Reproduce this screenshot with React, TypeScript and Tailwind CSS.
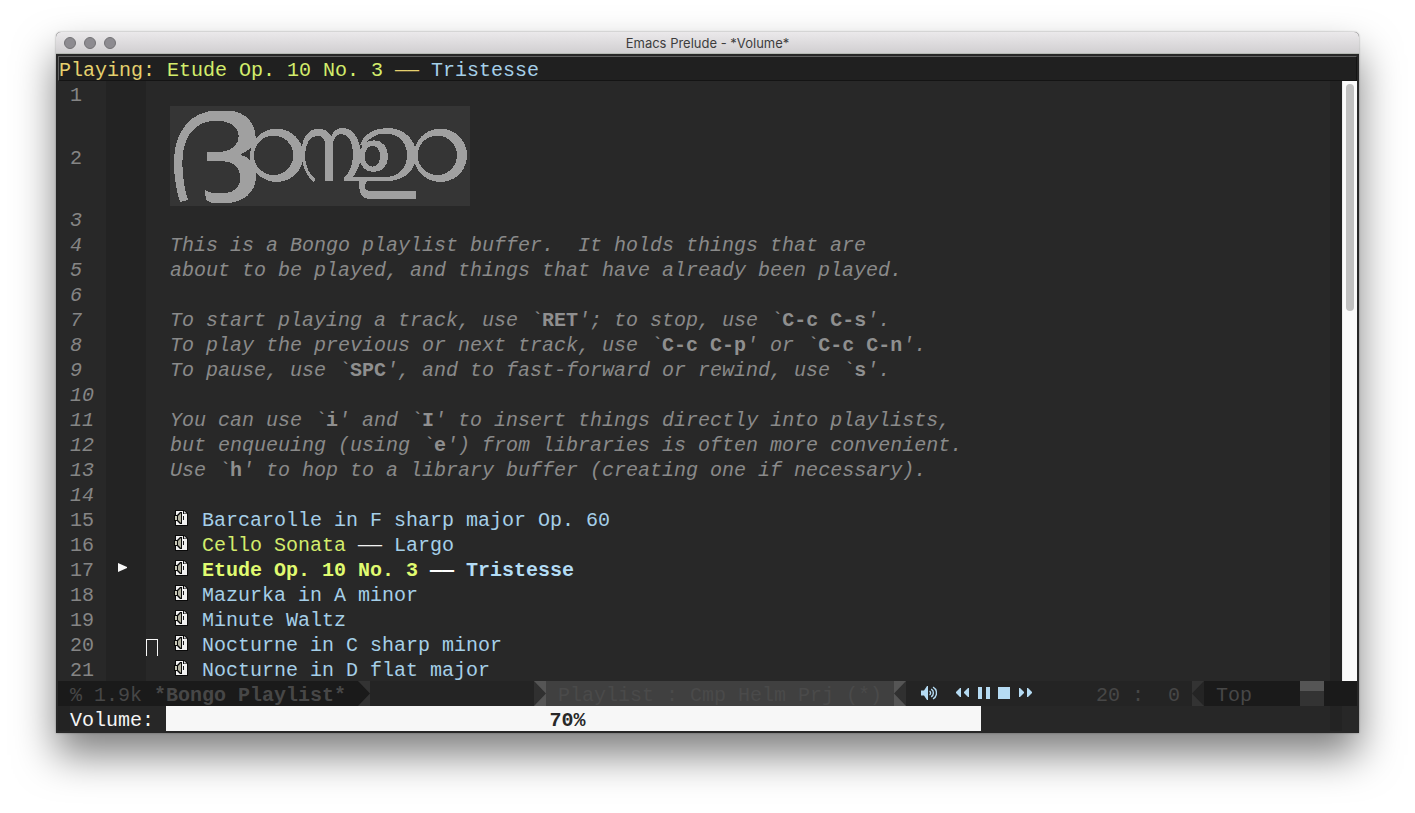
import React from 'react';

type Seg = [string, string?];

const key = 'not-italic font-bold text-[#8f8f8f]';

const intro: Seg[][] = [
  [],
  [['This is a Bongo playlist buffer.  It holds things that are']],
  [['about to be played, and things that have already been played.']],
  [],
  [['To start playing a track, use `'], ['RET', key], ["'; to stop, use `"], ['C-c C-s', key], ["'."]],
  [['To play the previous or next track, use `'], ['C-c C-p', key], ["' or `"], ['C-c C-n', key], ["'."]],
  [['To pause, use `'], ['SPC', key], ["', and to fast-forward or rewind, use `"], ['s', key], ["'."]],
  [],
  [['You can use `'], ['i', key], ["' and `"], ['I', key], ["' to insert things directly into playlists,"]],
  [['but enqueuing (using `'], ['e', key], ["') from libraries is often more convenient."]],
  [['Use `'], ['h', key], ["' to hop to a library buffer (creating one if necessary)."]],
  [],
];

const blue = 'text-[#a5cfe8]';
const lime = 'text-[#d3ec6c]';

const tracks: { segs: Seg[]; playing?: boolean; cursor?: boolean }[] = [
  { segs: [['Barcarolle in F sharp major Op. 60', blue]] },
  { segs: [['Cello Sonata', lime], [' —— ', 'text-[#f2f2f2]'], ['Largo', blue]] },
  {
    playing: true,
    segs: [
      ['Etude Op. 10 No. 3', 'font-bold text-[#e0fb70]'],
      [' —— ', 'font-bold text-white'],
      ['Tristesse', 'font-bold text-[#b3dcf5]'],
    ],
  },
  { segs: [['Mazurka in A minor', blue]] },
  { segs: [['Minute Waltz', blue]] },
  { cursor: true, segs: [['Nocturne in C sharp minor', blue]] },
  { segs: [['Nocturne in D flat major', blue]] },
];

function Segments({ segs }: { segs: Seg[] }) {
  return (
    <>
      {segs.map(([text, cls], i) => (
        <span key={i} className={cls}>
          {text}
        </span>
      ))}
    </>
  );
}

function Line({
  n,
  italic,
  marker,
  tall,
  children,
}: {
  n: number;
  italic?: boolean;
  marker?: boolean;
  tall?: boolean;
  children?: React.ReactNode;
}) {
  return (
    <div className={tall ? 'flex h-[100px]' : 'flex h-[25px]'}>
      <div
        className={
          italic
            ? 'flex w-12 shrink-0 items-center pt-1 pl-3 italic text-[#858585]'
            : 'flex w-12 shrink-0 items-center pt-1 pl-3 text-[#858585]'
        }
      >
        {n}
      </div>
      <div className="flex w-10 shrink-0 items-center bg-[#232323] pl-3">
        {marker && (
          <svg width="9" height="9" viewBox="0 0 9 9" className="mb-0.5" aria-hidden="true">
            <path d="M0 0L9 4V5L0 9Z" fill="#f8f8f8" />
          </svg>
        )}
      </div>
      {tall ? (
        <div className="min-w-0 flex-1">{children}</div>
      ) : (
        <div className="flex min-w-0 flex-1 items-center pt-1">{children}</div>
      )}
    </div>
  );
}

function BongoLogo() {
  return (
    <svg
      width="300"
      height="100"
      viewBox="30 30 900 300"
      shapeRendering="crispEdges"
      className="ml-6 bg-[#353535]"
      role="img"
      aria-label="Bongo"
    >
      <g fill="#a0a0a0" fillRule="evenodd">
        <path d="M60 318C48 280 41 235 42 190C44 105 95 44 170 44L205 44C258 46 286 82 287 125C290 140 272 162 241 176C272 186 290 205 288 240C288 290 250 322 190 322L170 322C150 321 137 315 137 303L134 282C148 290 160 292 175 292L190 292C225 291 241 272 241 245C241 215 222 196 185 195L141 195L141 168L185 168C218 163 236 145 236 120C236 92 210 74 170 74C105 74 67 120 67 200C67 235 73 280 84 312Z" />
        <path d="M350 98a80 80 0 1 0 0.1 0ZM341 119a59 59 0 1 1 -0.1 0Z" />
        <path d="M841 98a80 80 0 1 0 0.1 0ZM832 119a59 59 0 1 1 -0.1 0Z" />
        <path d="M460 258C438 236 424 210 424 165C426 125 446 98 476 98C493 98 506 107 514 121C520 104 533 96 549 96C580 97 602 130 602 178C602 205 590 232 578 243L675 243C717 243 741 215 741 178C741 140 717 113 675 113C645 113 622 128 613 152L600 146C611 115 640 96 680 96C732 96 768 130 768 176C768 222 735 255 682 255L622 255C616 262 614 267 614 272C615 280 621 285 632 285L768 285L768 309L625 309C608 307 598 292 598 275L598 255L553 255L553 245C568 230 579 208 579 175C579 140 566 114 545 114C528 114 519 128 519 148L519 255L495 255L495 148C495 130 488 119 473 119C450 119 435 145 435 180C435 210 447 234 467 251Z" />
        <path d="M641 133C667 133 684 152 684 181C684 209 668 228 641 228C615 228 598 209 598 181C598 152 615 133 641 133ZM638 150C624 150 614 162 614 181C614 200 624 212 638 212C651 212 660 200 660 181C660 162 651 150 638 150Z" />
      </g>
    </svg>
  );
}

function TrackIcon() {
  return (
    <svg width="14" height="16" viewBox="0 0 14 16" className="mr-3.5 mb-1.5 ml-7 shrink-0" aria-hidden="true">
      <path d="M1 0H10L14 3V16H1Z" fill="#0a0a0a" />
      <path d="M2 1H9V4H13V15H2Z" fill="#f0f0f0" />
      <path d="M10 1L13 3.5H10Z" fill="#d8d8d8" />
      <path d="M0 5H3L6 2H8V14H6L3 11H0Z" fill="#0a0a0a" />
      <path d="M1 6H3V10H1Z" fill="#c9c9b8" />
      <path d="M4 6L7 3V13L4 10Z" fill="#b4b4a2" />
      <path d="M9 6H10V10H9Z" fill="#1a1a1a" />
    </svg>
  );
}

function Arrow({ flip, bg, fill }: { flip?: boolean; bg: string; fill: string }) {
  return (
    <svg width="12" height="25" viewBox="0 0 12 25" className="shrink-0" aria-hidden="true">
      <rect width="12" height="25" fill={bg} />
      <path d={flip ? 'M12 0L0 12.5L12 25Z' : 'M0 0L12 12.5L0 25Z'} fill={fill} />
    </svg>
  );
}

function Controls() {
  return (
    <div className="flex items-center pl-[15px]">
      <button type="button" aria-label="Volume" className="flex h-[25px] items-center">
        <svg width="16" height="14" viewBox="0 0 16 14" fill="#b5dbf3" className="mb-0.5">
          <path d="M0 4.5H3L6 0H7V14H6L3 9.5H0Z" />
          <path
            d="M8.5 5.2a2 2 0 0 1 0 3.6M10.2 3.2a4.4 4.4 0 0 1 0 7.6M12 1.2a6.6 6.6 0 0 1 0 11.6"
            fill="none"
            stroke="#b5dbf3"
            strokeWidth="1.4"
          />
        </svg>
      </button>
      <button type="button" aria-label="Previous" className="ml-[19px] flex h-[25px] items-center">
        <svg width="14" height="9" viewBox="0 0 14 9" fill="#b5dbf3" className="mb-0.5">
          <path d="M5 0V9H4L0 5V4L4 0ZM13 0V9H12L8 5V4L12 0Z" />
        </svg>
      </button>
      <button type="button" aria-label="Pause" className="ml-2 flex h-[25px] items-center">
        <svg width="12" height="12" viewBox="0 0 12 12" fill="#b5dbf3" className="mb-0.5">
          <path d="M0 0H4V12H0ZM8 0H12V12H8Z" />
        </svg>
      </button>
      <button type="button" aria-label="Stop" className="ml-2 flex h-[25px] items-center">
        <svg width="12" height="12" viewBox="0 0 12 12" fill="#b5dbf3" className="mb-0.5">
          <path d="M0 0H12V12H0Z" />
        </svg>
      </button>
      <button type="button" aria-label="Next" className="ml-[9px] flex h-[25px] items-center">
        <svg width="14" height="9" viewBox="0 0 14 9" fill="#b5dbf3" className="mb-0.5">
          <path d="M0 0V9H1L5 5V4L1 0ZM8 0V9H9L13 5V4L9 0Z" />
        </svg>
      </button>
    </div>
  );
}

export default function App() {
  return (
    <div className="flow-root min-h-screen bg-white">
      <main className="mx-14 mt-8 overflow-hidden rounded-t-[5px] bg-[#272727] font-['Liberation_Mono',monospace] text-[20px] leading-[25px] whitespace-pre shadow-[0_22px_40px_rgba(0,0,0,0.5),0_0_2px_rgba(0,0,0,0.4)]">
        <header className="relative flex h-[22px] items-center justify-center border-b border-[#b5b9b3] bg-linear-to-b from-[#ebe9eb] to-[#d1cfd1] font-['Inter',sans-serif] text-[13px] text-[#3d3d3d]">
          <div className="absolute left-2 flex gap-2">
            <span className="size-3 rounded-full border border-[#737275] bg-[#8d8b90]" />
            <span className="size-3 rounded-full border border-[#737275] bg-[#8d8b90]" />
            <span className="size-3 rounded-full border border-[#737275] bg-[#8d8b90]" />
          </div>
          <h1 className="mt-0.5">Emacs Prelude - *Volume*</h1>
        </header>

        <div className="border-2 border-[#272727]">
          <div className="flex h-[25px] items-center border border-t-[#606060] border-r-[#141414] border-b-[#141414] border-l-[#606060] bg-[#202020] pt-1">
            <span className="text-[#e5d06e]">Playing: </span>
            <span className="text-[#d3ec6c]">Etude Op. 10 No. 3 </span>
            <span className="text-[#e5d06e]">—— </span>
            <span className="text-[#a5cfe8]">Tristesse</span>
          </div>

          <div className="flex">
            <div className="min-w-0 flex-1 bg-[#282828]">
              <Line n={1} />
              <Line n={2} tall>
                <BongoLogo />
              </Line>
              {intro.map((segs, i) => (
                <Line key={i} n={i + 3} italic>
                  <p className="pl-6 italic text-[#8a8a8a]">
                    <Segments segs={segs} />
                  </p>
                </Line>
              ))}
              {tracks.map((t, i) => (
                <Line key={i} n={i + 15} marker={t.playing}>
                  <div className="relative flex items-center">
                    {t.cursor && (
                      <span className="absolute top-1.5 left-0 h-[17px] w-3 border border-b-0 border-[#f8f8f8]" />
                    )}
                    <TrackIcon />
                    <p>
                      <Segments segs={t.segs} />
                    </p>
                  </div>
                </Line>
              ))}
            </div>
            <div className="w-3 bg-[#232323]" />
            <div className="flex w-[15px] justify-center border-l border-[#ededed] bg-[#fafafa] pt-[3px]">
              <div className="h-[227px] w-2 rounded-full bg-[#c1c1c1]" />
            </div>
          </div>

          <div className="flex h-[25px] bg-[#242424] text-[#474747]">
            <div className="flex w-[300px] items-center bg-[#1a1a1a] pt-1 pl-3">
              % 1.9k <b>*Bongo Playlist*</b>
            </div>
            <Arrow bg="#333333" fill="#1a1a1a" />
            <div className="w-[164px]" />
            <Arrow bg="#555555" fill="#303030" />
            <div className="flex w-[348px] items-center bg-[#404040] pt-1 pl-3 text-[#4a4a4a]">
              Playlist : Cmp Helm Prj (*)
            </div>
            <Arrow flip bg="#555555" fill="#303030" />
            <Controls />
            <div className="flex flex-1 items-center justify-end pt-1 pr-3">20 :  0</div>
            <Arrow flip bg="#333333" fill="#242424" />
            <div className="flex w-24 items-center bg-[#1a1a1a] pt-1 pl-3">Top</div>
            <div className="w-6 border-t-10 border-[#555555] bg-[#333333]" />
            <div className="w-[33px] bg-[#1a1a1a]" />
          </div>

          <div className="flex h-[25px]">
            <div className="w-3 bg-[#232323]" />
            <label htmlFor="volume" className="flex items-center pt-1 text-[#f5f5f5]">
              {'Volume: '}
            </label>
            <div className="flex-1">
              <div className="flex h-full w-[70%] items-center justify-center bg-[#f7f7f7] pt-1 pr-3 font-bold text-[#282828]">
                <output id="volume">70%</output>
              </div>
            </div>
            <div className="w-3 bg-[#232323]" />
            <div className="w-[15px]" />
          </div>
        </div>
      </main>
    </div>
  );
}
